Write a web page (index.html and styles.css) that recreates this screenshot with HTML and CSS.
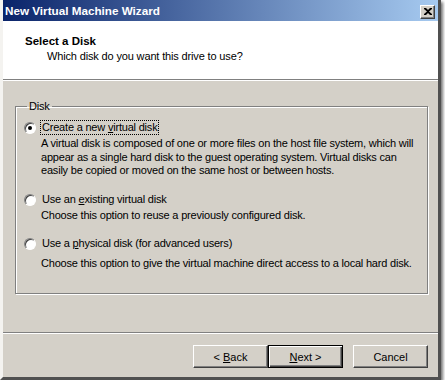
FILE: index.html
```html
<!DOCTYPE html>
<html lang="en">
<head>
    <meta charset="UTF-8">
    <title>New Virtual Machine Wizard</title>
    <link rel="stylesheet" href="styles.css">
</head>
<body>
    <div class="window">
        <div class="titlebar">
            <span class="title">New Virtual Machine Wizard</span>
            <span class="close">
                <svg width="8" height="7" viewBox="0 0 8 7"><path d="M0 0h2l2 2 2-2h2v1l-3 2.5 3 2.5v1h-2l-2-2-2 2h-2v-1l3-2.5-3-2.5z" fill="#000"/></svg>
            </span>
        </div>
        <div class="header">
            <h1>Select a Disk</h1>
            <p>Which disk do you want this drive to use?</p>
        </div>
        <div class="content">
            <fieldset class="group">
                <legend>Disk</legend>
                <div class="option">
                    <span class="radio checked"></span>
                    <div class="option-text">
                        <span class="label focus">Create a new <u>v</u>irtual disk</span>
                        <p>A virtual disk is composed of one or more files on the host file system, which will appear as a single hard disk to the guest operating system. Virtual disks can easily be copied or moved on the same host or between hosts.</p>
                    </div>
                </div>
                <div class="option">
                    <span class="radio"></span>
                    <div class="option-text">
                        <span class="label">Use an <u>e</u>xisting virtual disk</span>
                        <p>Choose this option to reuse a previously configured disk.</p>
                    </div>
                </div>
                <div class="option last">
                    <span class="radio"></span>
                    <div class="option-text">
                        <span class="label">Use a <u>p</u>hysical disk (for advanced users)</span>
                        <p>Choose this option to give the virtual machine direct access to a local hard disk.</p>
                    </div>
                </div>
            </fieldset>
        </div>
        <div class="footer">
            <button class="btn">&lt; <u>B</u>ack</button>
            <button class="btn default"><u>N</u>ext &gt;</button>
            <button class="btn cancel">Cancel</button>
        </div>
    </div>
</body>
</html>
```
FILE: styles.css
```css
body {
    margin: 0;
    background: #fff;
    font-family: "Liberation Sans", Arial, sans-serif;
    font-size: 11px;
    color: #000;
}
.window {
    box-sizing: border-box;
    width: 441px;
    height: 380px;
    display: flex;
    flex-direction: column;
    background: #d4d0c8;
    border-left: 3px solid #f4f3f0;
    border-right: 3px solid #505050;
    border-bottom: 3px solid #505050;
    box-shadow: 2px 2px 3px rgba(0, 0, 0, 0.55);
}
.titlebar {
    height: 21px;
    display: flex;
    align-items: center;
    justify-content: space-between;
    padding: 0 3px 0 2px;
    background: linear-gradient(to right, #0a246a, #a6caf0);
}
.title {
    color: #fff;
    font-weight: bold;
    font-size: 11.7px;
}
.close {
    box-sizing: border-box;
    width: 15px;
    height: 14px;
    margin-top: 2px;
    display: flex;
    align-items: center;
    justify-content: center;
    background: #d4d0c8;
    border: 1px solid;
    border-color: #fff #404040 #404040 #fff;
    box-shadow: inset -1px -1px #808080;
}
.header {
    height: 59px;
    box-sizing: border-box;
    background: #fff;
    padding: 13px 0 0 22px;
    border-bottom: 1px solid #808080;
    box-shadow: 0 1px #fff;
    margin-bottom: 1px;
}
.header h1 {
    margin: 0;
    font-size: 11.5px;
    font-weight: bold;
    line-height: 14px;
}
.header p {
    margin: 1px 0 0 22px;
    line-height: 14px;
    letter-spacing: -0.15px;
}
.content {
    flex: 1;
    padding: 19px 10px 0 12px;
    border-bottom: 1px solid #808080;
    box-shadow: 0 1px #fff;
    margin-bottom: 1px;
}
.group {
    margin: 0;
    height: 194px;
    box-sizing: border-box;
    padding: 7px 2px 0 8px;
    border: 1px solid #808080;
    box-shadow: inset 1px 1px #fff, 1px 1px #fff;
    letter-spacing: -0.2px;
}
.group legend {
    padding: 0 2px;
    margin-left: 3px;
    line-height: 13px;
}
.option {
    display: flex;
    gap: 4px;
    margin-bottom: 14px;
}
.radio {
    box-sizing: border-box;
    flex: none;
    width: 12px;
    height: 12px;
    margin-top: 2px;
    border-radius: 50%;
    border: 1px solid;
    border-color: #808080 #fff #fff #808080;
    background: #fff;
    box-shadow: inset 1px 1px #404040;
    display: flex;
    align-items: center;
    justify-content: center;
}
.radio.checked::after {
    content: "";
    width: 4px;
    height: 4px;
    border-radius: 50%;
    background: #000;
}
.option-text {
    flex: 1;
}
.label {
    display: inline-block;
    line-height: 13px;
    padding: 0 1px;
    border: 1px solid transparent;
}
.label.focus {
    border: 1px dotted #000;
}
.option-text p {
    margin: 2px 0 0 1px;
    line-height: 13.5px;
}
.option.last .option-text p {
    margin-top: 6px;
}
.footer {
    height: 43px;
    box-sizing: border-box;
    display: flex;
    justify-content: flex-end;
    padding: 11px 10px 0 0;
}
.btn {
    box-sizing: border-box;
    width: 75px;
    height: 23px;
    font-family: inherit;
    font-size: 11px;
    color: #000;
    background: #d4d0c8;
    border: 1px solid;
    border-color: #fff #404040 #404040 #fff;
    box-shadow: inset -1px -1px #808080;
    padding: 0;
}
.btn.default {
    border: 1px solid #000;
    box-shadow: inset 1px 1px #fff, inset -1px -1px #404040, inset -2px -2px #808080;
}
.btn.cancel {
    margin-left: 10px;
}
```
